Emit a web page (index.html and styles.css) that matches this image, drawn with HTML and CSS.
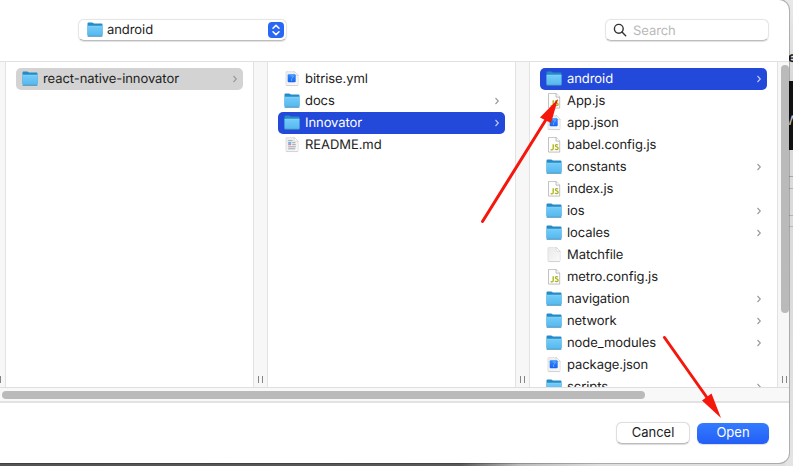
FILE: index.html
```html
<!DOCTYPE html>
<html lang="en">
<head>
<meta charset="utf-8">
<title>Open</title>
<link rel="stylesheet" href="styles.css">
</head>
<body>
<svg class="defs" aria-hidden="true">
  <defs>
    <linearGradient id="folder-face" x1="0" y1="0" x2="0" y2="1">
      <stop offset="0" stop-color="#73cbf8"/><stop offset="1" stop-color="#55b7ee"/>
    </linearGradient>
    <linearGradient id="blue" x1="0" y1="0" x2="0" y2="1">
      <stop offset="0" stop-color="#2f8bff"/><stop offset="1" stop-color="#1862ee"/>
    </linearGradient>
    <linearGradient id="paper" x1="0" y1="0" x2="1" y2="1">
      <stop offset="0" stop-color="#e9e9e9"/><stop offset="1" stop-color="#fafafa"/>
    </linearGradient>
    <symbol id="folder" viewBox="0 0 16 16">
      <path d="M.5 1.600q0-1.100 1-1.100h3.700q.6 0 1 .4l.7.6h7.600q1 0 1 1V13H.5z" fill="#258bc6"/>
      <path d="M.5 4h15v9.500q0 .8-.8.8H1.300q-.8 0-.8-.8z" fill="url(#folder-face)"/>
      <path d="M.6 4.100h14.800" stroke="#8bd8fb" stroke-width=".6"/>
      <path d="M.6 14.300h14.800" stroke="#3f83ac" stroke-width=".8"/>
    </symbol>
    <symbol id="page" viewBox="0 0 16 16">
      <path d="M1.900 1.200q0-.9.9-.9h7.400l4 4v9.300q0 .9-.9.9H2.800q-.9 0-.9-.9z" fill="url(#paper)" stroke="#dcdcdc" stroke-width=".7"/>
      <path d="M10.200.3v3.200q0 .8.800.8h3.200z" fill="#fff" stroke="#cacaca" stroke-width=".6"/>
      <path d="M2.200 14.600h11.700" stroke="#c4c4c4" stroke-width=".6"/>
    </symbol>
    <symbol id="code" viewBox="0 0 16 16">
      <use href="#page"/>
      <rect x="3.700" y="3.300" width="8" height="8" rx="1" fill="url(#blue)"/>
      <path d="M6.600 4.900h3L8.200 7.200M7.600 7.600v2.400" fill="none" stroke="#78b8ff" stroke-width=".8"/>
    </symbol>
    <symbol id="js" viewBox="0 0 16 16">
      <path d="M2.500.4h7.600l3.600 3.700v11H2.500z" fill="#fdfdfd" stroke="#a9a9a9" stroke-width=".7"/>
      <path d="M10.100.4v3.700h3.600" fill="#fff" stroke="#a0a0a0" stroke-width=".7"/>
      <path d="M7.200 7.300v4.100q0 1.500-1.300 1.500-.7 0-1.200-.4M12 8q-.6-.4-1.400-.4-1.200 0-1.200 1t1.300 1.300q1.400.4 1.400 1.500t-1.400 1.200q-1 0-1.600-.5" fill="none" stroke="#a9b313" stroke-width="1.300"/>
    </symbol>
    <symbol id="readme" viewBox="0 0 16 16">
      <use href="#page"/>
      <path d="M4.200 3.700h4.300M8.200 5.700h3.200M8.200 7.700h3.600M4.200 9.800h7.600M4.200 11.800h7" stroke="#929aaa" stroke-width=".9"/>
      <path d="M4.200 5.200h3v1.500h-3z" fill="#4e9fd8"/><path d="M4.200 7.700h3" stroke="#cb6c89" stroke-width="1"/>
    </symbol>
    <symbol id="chevron" viewBox="0 0 6 8">
      <path d="M1.500 1l2.800 3-2.800 3" fill="none" stroke="currentColor" stroke-width="1.1"/>
    </symbol>
  </defs>
</svg>

<main class="stage">
  <div class="backdrop-side"><span class="side-text">e</span><div class="side-dark">W</div><div class="side-lines"></div></div>
  <section class="dialog">
    <header class="toolbar">
      <div class="location"><svg class="icon"><use href="#folder"/></svg><span>android</span>
        <svg class="stepper" viewBox="0 0 16 16"><rect width="16" height="16" rx="4" fill="#2868f5"/><path d="M5 6.300l3-2.900 3 2.900M5 9.700l3 2.900 3-2.900" fill="none" stroke="#fff" stroke-width="1.5" stroke-linecap="round" stroke-linejoin="round"/></svg>
      </div>
      <div class="search"><svg class="lens" viewBox="0 0 14 14"><circle cx="5.800" cy="5.800" r="4.400"/><path d="M9 9l3.700 3.700"/></svg><span>Search</span></div>
    </header>

    <div class="browser">
      <div class="gutter first"><i></i></div>
      <ul class="column">
        <li class="row path"><svg class="icon"><use href="#folder"/></svg><span>react-native-innovator</span><svg class="chev"><use href="#chevron"/></svg></li>
      </ul>
      <div class="gutter"><i></i></div>
      <ul class="column">
        <li class="row"><svg class="icon"><use href="#code"/></svg><span>bitrise.yml</span></li>
        <li class="row"><svg class="icon"><use href="#folder"/></svg><span>docs</span><svg class="chev"><use href="#chevron"/></svg></li>
        <li class="row selected"><svg class="icon"><use href="#folder"/></svg><span>Innovator</span><svg class="chev"><use href="#chevron"/></svg></li>
        <li class="row"><svg class="icon"><use href="#readme"/></svg><span>README.md</span></li>
      </ul>
      <div class="gutter"><i></i></div>
      <ul class="column">
        <li class="row selected"><svg class="icon"><use href="#folder"/></svg><span>android</span><svg class="chev"><use href="#chevron"/></svg></li>
        <li class="row"><svg class="icon"><use href="#js"/></svg><span>App.js</span></li>
        <li class="row"><svg class="icon"><use href="#code"/></svg><span>app.json</span></li>
        <li class="row"><svg class="icon"><use href="#js"/></svg><span>babel.config.js</span></li>
        <li class="row"><svg class="icon"><use href="#folder"/></svg><span>constants</span><svg class="chev"><use href="#chevron"/></svg></li>
        <li class="row"><svg class="icon"><use href="#js"/></svg><span>index.js</span></li>
        <li class="row"><svg class="icon"><use href="#folder"/></svg><span>ios</span><svg class="chev"><use href="#chevron"/></svg></li>
        <li class="row"><svg class="icon"><use href="#folder"/></svg><span>locales</span><svg class="chev"><use href="#chevron"/></svg></li>
        <li class="row"><svg class="icon"><use href="#page"/></svg><span>Matchfile</span></li>
        <li class="row"><svg class="icon"><use href="#js"/></svg><span>metro.config.js</span></li>
        <li class="row"><svg class="icon"><use href="#folder"/></svg><span>navigation</span><svg class="chev"><use href="#chevron"/></svg></li>
        <li class="row"><svg class="icon"><use href="#folder"/></svg><span>network</span><svg class="chev"><use href="#chevron"/></svg></li>
        <li class="row"><svg class="icon"><use href="#folder"/></svg><span>node_modules</span><svg class="chev"><use href="#chevron"/></svg></li>
        <li class="row"><svg class="icon"><use href="#code"/></svg><span>package.json</span></li>
        <li class="row"><svg class="icon"><use href="#folder"/></svg><span>scripts</span><svg class="chev"><use href="#chevron"/></svg></li>
      </ul>
      <div class="gutter last"><b class="vthumb"></b><i></i></div>
    </div>
    <div class="hscroll"><div class="hthumb"></div></div>
    <footer class="actions"><button class="btn">Cancel</button><button class="btn primary">Open</button></footer>
  </section>

  <svg class="arrows" viewBox="0 0 793 466">
    <path class="shaft" d="M482.500 221.500L547 118M664.500 337.500L708 399"/>
    <path class="head" d="M558 99L551 123 540 117.500ZM721 418L702 400.500 711.500 393.500Z"/>
  </svg>
</main>
</body>
</html>
```
FILE: styles.css
```css
* { box-sizing: border-box; }
body {
  margin: 0;
  overflow: hidden;
  font-family: Inter, "Liberation Sans", sans-serif;
  font-size: 13px;
  letter-spacing: -.07px;
  text-rendering: geometricPrecision;
  color: #1c1c1c;
}
.defs { position: absolute; width: 0; height: 0; }
.stage {
  position: relative;
  width: 793px;
  height: 466px;
  overflow: hidden;
  background: linear-gradient(90deg, #555355 0, #5a585a 460px, #bcbcbc 520px, #dedede 600px);
}
.backdrop-side {
  position: absolute;
  top: 0;
  right: 0;
  width: 8px;
  height: 466px;
  padding-top: 50px;
  background: linear-gradient(#e9e9e9, #d9d9d9 81px, #dcdcdc 300px, #e4e4e4);
}
.side-text { display: block; height: 31px; padding-left: 3px; line-height: 16px; font-weight: 700; font-size: 14px; }
.side-dark { height: 69px; padding: 31px 0 0 1px; background: #111; color: #ccc; line-height: 18px; overflow: hidden; }
.side-lines {
  height: 77px;
  background: linear-gradient(#aaa, #aaa) 0 26px / 8px 1px no-repeat, linear-gradient(#b5b5b5, #b5b5b5) 0 38px / 8px 1px no-repeat, linear-gradient(#b5b5b5, #b5b5b5) 0 65px / 8px 1px no-repeat, linear-gradient(#bbb, #bbb) 0 76px / 8px 1px no-repeat;
}
.dialog {
  position: relative;
  display: flex;
  flex-direction: column;
  width: 789px;
  height: 463px;
  overflow: hidden;
  background: #fff;
  border-radius: 0 10px 10px 0;
  box-shadow: 0 0 0 1px rgba(0, 0, 0, .23);
}
.toolbar {
  display: flex;
  justify-content: space-between;
  flex: none;
  height: 62px;
  padding: 19px 20px 0 78px;
  border-bottom: 1px solid #e1e1e1;
}
.location, .search {
  display: flex;
  align-items: center;
  height: 22px;
  border: 1px solid #e5e5e5;
  border-bottom-color: #bdbdbd;
  border-radius: 6px;
  box-shadow: 0 .5px 1px rgba(0, 0, 0, .12);
}
.location { width: 209px; padding: 0 2px 0 8px; }
.location span { margin-left: 4px; line-height: 18px; }
.search { width: 164px; padding-left: 7px; color: #b9b9b9; }
.search span { margin-left: 6px; padding-top: 2px; line-height: 18px; }
.icon { flex: none; width: 16px; height: 16px; }
.stepper { width: 16px; height: 16px; margin-left: auto; }
.lens { width: 14px; height: 14px; fill: none; stroke: #333; stroke-width: 1.4; stroke-linecap: round; }
.browser { display: flex; flex: none; height: 325px; }
.column {
  width: 247px;
  flex: none;
  height: 325px;
  margin: 0;
  padding: 6px 10px 0;
  overflow: hidden;
  list-style: none;
}
.row {
  display: flex;
  align-items: center;
  height: 22px;
  padding: 0 5px 0 6px;
  border-radius: 5px;
  white-space: nowrap;
}
.row span { margin-left: 5px; line-height: 18px; }
.row.path { background: #d3d3d3; }
.row.selected { background: #2349da; color: #fff; }
.chev { width: 6px; height: 8px; margin-left: auto; color: #999; }
.selected .chev { color: #c4ceff; }
.gutter {
  position: relative;
  display: flex;
  flex: none;
  justify-content: center;
  align-items: flex-end;
  width: 15px;
  padding-bottom: 4px;
  background: #f7f7f7;
  border: solid #e2e2e2;
  border-width: 0 1px;
}
.gutter i { width: 5px; height: 7px; border: solid #858585; border-width: 0 1px; }
.gutter.first { width: 6px; justify-content: flex-start; border-left: 0; }
.gutter.first i { width: 1px; border-left: 0; }
.gutter.last { width: 12px; border-right: 0; }
.gutter.last i { margin-left: 2px; }
.vthumb { position: absolute; top: 3px; right: 0; width: 8px; height: 248px; border-radius: 4px; background: #bababa; }
.hscroll {
  flex: none;
  height: 16px;
  padding: 3px 2px 0;
  border-top: 1px solid #dedede;
  border-bottom: 2px solid #e2e2e2;
  background: #f8f8f8;
}
.hthumb { width: 643px; height: 8px; border-radius: 4px; background: #bababa; }
.actions { display: flex; gap: 7px; justify-content: flex-end; padding: 19px 20px 0 0; }
.btn {
  width: 74px;
  height: 22px;
  padding: 0 0 2px;
  border: 1px solid #dfdfdf;
  border-bottom-color: #bbb;
  border-radius: 6px;
  background: #fff;
  color: #1c1c1c;
  font: inherit;
  line-height: 18px;
  box-shadow: 0 .5px 1px rgba(0, 0, 0, .14);
}
.btn.primary { width: 72px; height: 21px; margin-top: 1px; padding-bottom: 3px; border: 0; background: linear-gradient(#347bff, #235ff6); color: #fff; }
.arrows { position: absolute; inset: 0; width: 793px; height: 466px; pointer-events: none; }
.shaft { fill: none; stroke: #f5160c; stroke-width: 3; stroke-linecap: round; }
.head { fill: #f5160c; }
```
